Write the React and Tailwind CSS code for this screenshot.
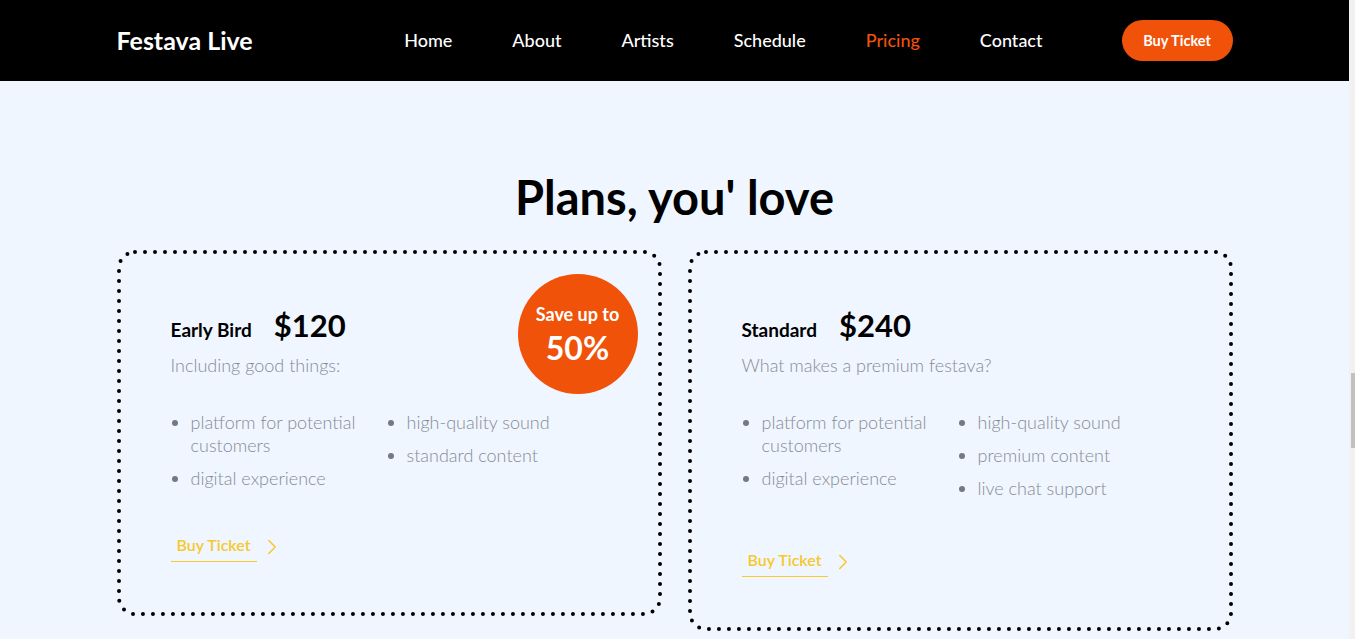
import { ChevronRight } from "lucide-react";

const navLinks = ["Home", "About", "Artists", "Schedule", "Pricing", "Contact"];

const plans = [
  {
    name: "Early Bird",
    price: "$120",
    tagline: "Including good things:",
    left: ["platform for potential customers", "digital experience"],
    right: ["high-quality sound", "standard content"],
    badge: true,
    linkTop: "mt-[43px]",
  },
  {
    name: "Standard",
    price: "$240",
    tagline: "What makes a premium festava?",
    left: ["platform for potential customers", "digital experience"],
    right: ["high-quality sound", "premium content", "live chat support"],
    badge: false,
    linkTop: "mt-[48px]",
  },
];

// dotted outline, round dots every 10px like the original
function DottedFrame() {
  return (
    <svg className="absolute inset-0 w-full h-full pointer-events-none" aria-hidden="true">
      <rect
        x="2"
        y="2"
        rx="16"
        ry="16"
        style={{ width: "calc(100% - 4px)", height: "calc(100% - 4px)" }}
        fill="none"
        stroke="#000"
        strokeWidth="4"
        strokeLinecap="round"
        strokeDasharray="0 10"
      />
    </svg>
  );
}

function PlanCard({ plan }) {
  return (
    <div className="relative self-start px-[54px] pt-[53px] pb-[54px]">
      <DottedFrame />
      {plan.badge && (
        <div className="absolute top-6 right-6 w-[120px] h-[120px] rounded-full bg-[#f0520a] flex flex-col items-center justify-center text-white">
          <div className="text-[18px] font-bold leading-none">Save up to</div>
          <div className="text-[32px] font-bold leading-none mt-[9px]">50%</div>
        </div>
      )}
      <div className="flex items-baseline gap-[22px]">
        <span className="text-[19px] font-bold text-black">{plan.name}</span>
        <span className="text-[31px] font-bold text-black leading-[44px]">{plan.price}</span>
      </div>
      <p className="mt-[5px] text-[18px] font-light text-[#878b93]">{plan.tagline}</p>
      <div className="mt-[32px] grid grid-cols-[216px_216px]">
        <ul className="list-disc pl-5 marker:text-[#75787f] space-y-[10px]">
          {plan.left.map((item) => (
            <li key={item} className="text-[18px] leading-[23px] font-light text-[#878b93] pr-4">{item}</li>
          ))}
        </ul>
        <ul className="list-disc pl-5 marker:text-[#75787f] space-y-[10px]">
          {plan.right.map((item) => (
            <li key={item} className="text-[18px] leading-[23px] font-light text-[#878b93]">{item}</li>
          ))}
        </ul>
      </div>
      <div className={plan.linkTop + " flex items-center gap-[2px]"}>
        <a href="#" className="px-[6px] pb-[4px] border-b border-[#f6c92c] text-[16px] font-semibold text-[#f6c92c]">
          Buy Ticket
        </a>
        <ChevronRight className="w-[26px] h-[26px] text-[#f6c92c] -mt-[2px]" strokeWidth={1.4} />
      </div>
    </div>
  );
}

export default function App() {
  return (
    <div className="min-h-screen flex bg-[#eff6ff]" style={{ fontFamily: "Lato, 'Noto Sans', sans-serif" }}>
      <main className="flex-1">
        <header className="bg-black h-[81px]">
          <div className="max-w-[1116px] mx-auto h-full flex items-center">
            <div className="text-white text-[25px] font-bold">Festava Live</div>
            <nav className="ml-auto flex items-center gap-[60px]">
              {navLinks.map((link) => (
                <a
                  key={link}
                  href="#"
                  className={"text-[18px] font-medium " + (link === "Pricing" ? "text-[#f0520a]" : "text-white")}
                >
                  {link}
                </a>
              ))}
            </nav>
            <button className="ml-[79px] bg-[#f0520a] text-white text-[14.5px] font-bold rounded-full w-[111px] h-[41px]">
              Buy Ticket
            </button>
          </div>
        </header>

        <section className="max-w-[1116px] mx-auto pt-[87px]">
          <h2 className="text-center text-[47px] font-bold text-black leading-[58px]">Plans, you' love</h2>
          <div className="mt-[24px] grid grid-cols-2 gap-[26px]">
            {plans.map((plan) => (
              <PlanCard key={plan.name} plan={plan} />
            ))}
          </div>
        </section>
      </main>
      <div className="relative w-[6px] bg-[#f1f1f1]">
        <div className="absolute left-[2px] right-0 top-[373px] h-[75px] bg-[#c1c1c1]" />
      </div>
    </div>
  );
}
